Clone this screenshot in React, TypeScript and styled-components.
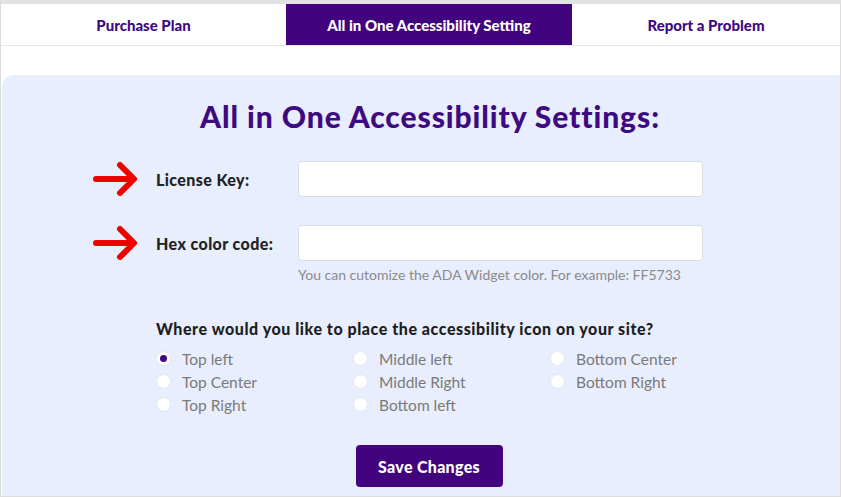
import React, { useState } from 'react';
import styled, { createGlobalStyle } from 'styled-components';

const GlobalStyle = createGlobalStyle`
  html, body {
    margin: 0;
    padding: 0;
    background: #ffffff;
  }
  body {
    font-family: Lato, "Open Sans", sans-serif;
  }
`;

const Frame = styled.div`
  width: 841px;
  height: 497px;
  box-sizing: border-box;
  border: 1px solid #dcdcdc;
  border-top: 4px solid #e2e2e2;
  background: #ffffff;
  display: flex;
  flex-direction: column;
  overflow: hidden;
`;

const TabBar = styled.nav`
  display: grid;
  grid-template-columns: 285px 286px 1fr;
  height: 41px;
  border-bottom: 1px solid #e6e6e6;
`;

const Tab = styled.div<{ $active?: boolean }>`
  display: flex;
  align-items: center;
  justify-content: center;
  font-size: 15px;
  font-weight: 900;
  color: ${(p) => (p.$active ? '#ffffff' : '#3e0a80')};
  background: ${(p) => (p.$active ? '#42047e' : '#ffffff')};
`;

const Panel = styled.main`
  flex: 1;
  margin: 29px 0 0 1px;
  background: #e8eefd;
  border-radius: 12px 0 0 0;
  display: flex;
  flex-direction: column;
  align-items: center;
`;

const Title = styled.h1`
  margin: 23px 0 0 18px;
  height: 63px;
  font-size: 30px;
  font-weight: 900;
  color: #3e0a80;
  letter-spacing: 0.9px;
`;

const Form = styled.div`
  width: 548px;
  margin-left: 18px;
  display: flex;
  flex-direction: column;
`;

const FieldRow = styled.div<{ $gap?: number }>`
  position: relative;
  display: grid;
  grid-template-columns: 142px 405px;
  align-items: center;
  margin-bottom: ${(p) => p.$gap ?? 0}px;
`;

const Arrow = styled.svg`
  position: absolute;
  left: -64px;
  top: 50%;
  transform: translateY(-50%);
`;

const Label = styled.label`
  font-size: 16px;
  font-weight: 900;
  letter-spacing: 0.4px;
  color: #222222;
`;

const TextInput = styled.input`
  box-sizing: border-box;
  height: 36px;
  width: 405px;
  border: 1px solid #d9dde6;
  border-radius: 4px;
  background: #ffffff;
  outline: none;
`;

const Help = styled.div`
  margin: 5px 0 0 142px;
  font-size: 14px;
  color: #8a8a8a;
`;

const Question = styled.div`
  margin-top: 36px;
  font-size: 16px;
  font-weight: 900;
  letter-spacing: 0.55px;
  color: #1e1e1e;
`;

const RadioGrid = styled.div`
  margin-top: 9px;
  display: grid;
  grid-template-columns: 197px 197px 1fr;
  grid-auto-flow: column;
  grid-template-rows: repeat(3, 23px);
`;

const RadioItem = styled.label`
  display: flex;
  align-items: center;
  gap: 11px;
  font-size: 15.5px;
  color: #7a7a7a;
  cursor: pointer;
`;

const Dot = styled.span<{ $checked?: boolean }>`
  width: 15px;
  height: 15px;
  border-radius: 50%;
  background: #ffffff;
  box-sizing: border-box;
  border: 1px solid #e3e6ee;
  display: flex;
  align-items: center;
  justify-content: center;
  &::after {
    content: '';
    width: 7px;
    height: 7px;
    border-radius: 50%;
    background: ${(p) => (p.$checked ? '#42047e' : 'transparent')};
  }
`;

const SaveButton = styled.button`
  margin: 29px 0 0 16px;
  width: 147px;
  height: 42px;
  border: none;
  border-radius: 4px;
  background: #42047e;
  color: #ffffff;
  font-family: Lato, sans-serif;
  font-size: 16px;
  font-weight: 900;
  letter-spacing: 0.3px;
  cursor: pointer;
`;

const RedArrow = () => (
  <Arrow width="48" height="36" viewBox="0 0 48 36">
    <g stroke="#f10000" strokeWidth="6" strokeLinecap="round" strokeLinejoin="round" fill="none">
      <line x1="4" y1="18" x2="40" y2="18" />
      <polyline points="28,4 42,18 28,32" />
    </g>
  </Arrow>
);

const positions = [
  'Top left',
  'Top Center',
  'Top Right',
  'Middle left',
  'Middle Right',
  'Bottom left',
  'Bottom Center',
  'Bottom Right',
];

const App: React.FC = () => {
  const [selected, setSelected] = useState('Top left');

  return (
    <Frame>
      <GlobalStyle />
      <TabBar>
        <Tab>Purchase Plan</Tab>
        <Tab $active>All in One Accessibility Setting</Tab>
        <Tab>Report a Problem</Tab>
      </TabBar>
      <Panel>
        <Title>All in One Accessibility Settings:</Title>
        <Form>
          <FieldRow $gap={28}>
            <RedArrow />
            <Label>License Key:</Label>
            <TextInput />
          </FieldRow>
          <FieldRow>
            <RedArrow />
            <Label>Hex color code:</Label>
            <TextInput />
          </FieldRow>
          <Help>You can cutomize the ADA Widget color. For example: FF5733</Help>
          <Question>Where would you like to place the accessibility icon on your site?</Question>
          <RadioGrid>
            {positions.map((p) => (
              <RadioItem key={p} onClick={() => setSelected(p)}>
                <Dot $checked={selected === p} />
                {p}
              </RadioItem>
            ))}
          </RadioGrid>
        </Form>
        <SaveButton>Save Changes</SaveButton>
      </Panel>
    </Frame>
  );
};

export default App;
